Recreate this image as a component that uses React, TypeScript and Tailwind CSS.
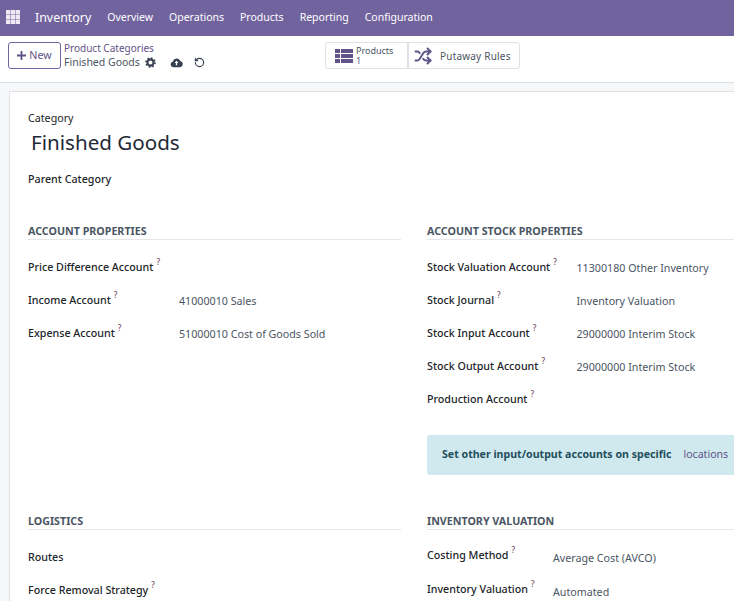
import React from "react";
import { Shuffle, RotateCcw } from "lucide-react";

const Row = ({ label, value, help = true, w = "w-[150px]", h = "h-[33px]", pt = "pt-[1px]" }: { label: string; value?: string; help?: boolean; w?: string; h?: string; pt?: string }) => (
  <div className={`flex ${h} items-start text-[10.7px] leading-[17px]`}>
    <div className={`${w} shrink-0 text-[#212529] font-medium whitespace-nowrap`}>
      {label}
      {help && <sup className="ml-[3px] text-[8px] text-[#714b67] top-[-6px]">?</sup>}
    </div>
    {value && <div className={`${pt} text-[#4b5563] whitespace-nowrap`}>{value}</div>}
  </div>
);

const Heading = ({ children }: { children: React.ReactNode }) => (
  <div className="h-[16px] border-b border-[#e3e6ea] text-[10.7px] font-bold leading-[15px] text-[#4b5563]">{children}</div>
);

export default function App() {
  return (
    <div className="h-[601px] w-[734px] overflow-hidden bg-white font-['Noto_Sans',sans-serif]">
      <nav className="flex h-9 items-center bg-[#71639e] pb-[1px] text-[10.5px] text-white">
        <svg className="mb-[2px] ml-[6px] h-[14px] w-[14px]" viewBox="0 0 14 14">
          {[0, 5, 10].map((y) => [0, 5, 10].map((x) => <rect key={`${x}${y}`} x={x} y={y} width="4.5" height="4.5" fill="#f1e9f2" />))}
        </svg>
        <span className="ml-[15px] mt-[2px] text-[12.4px]">Inventory</span>
        <div className="ml-4 flex gap-4">
          <span>Overview</span>
          <span>Operations</span>
          <span>Products</span>
          <span>Reporting</span>
          <span>Configuration</span>
        </div>
      </nav>

      <header className="relative flex h-[47px] items-start border-b border-[#dee2e6] pl-2 pt-[6px]">
        <button className="flex h-[27px] w-[53px] items-center justify-center gap-[3px] rounded-[3px] border border-[#71639e] text-[10.7px] text-[#5f5387]">
          <svg className="h-[9px] w-[9px]" viewBox="0 0 10 10"><path d="M4 0h2v4h4v2H6v4H4V6H0V4h4z" fill="#5f5387" /></svg>
          New
        </button>
        <div className="ml-[3px] mt-[-1px] leading-[14px]">
          <div className="text-[10px] text-[#5f5387]">Product Categories</div>
          <div className="flex items-center text-[10.5px] text-[#4b5563]">
            Finished Goods
            <svg className="ml-[5px] h-[11px] w-[11px]" viewBox="0 0 12 12"><circle cx="6" cy="6" r="3.4" fill="none" stroke="#374151" strokeWidth="2.4" /><circle cx="6" cy="6" r="5" fill="none" stroke="#374151" strokeWidth="1.6" strokeDasharray="1.8 2.1" /></svg>
            <svg className="ml-[14px] h-[11px] w-[13px]" viewBox="0 0 14 11"><path d="M3.5 10.5a3 3 0 0 1-.6-5.9A4.3 4.3 0 0 1 11 3.8a3.4 3.4 0 0 1 0 6.7z" fill="#374151" /><path d="M7 3.5 4.8 6h1.5v2.5h1.4V6h1.5z" fill="#fff" /></svg>
            <RotateCcw className="ml-[11px] h-[11px] w-[11px] text-[#374151]" strokeWidth={2.5} />
          </div>
        </div>
        <div className="absolute left-[325px] top-[6px] flex h-[27px] rounded-[3px] border border-[#dee2e6]">
          <div className="flex w-[83px] items-center border-r-2 border-[#dee2e6] pl-[9px]">
            <svg className="h-[14px] w-[18px]" viewBox="0 0 18 14" fill="#5f5387">
              <rect width="5" height="4" /><rect y="5" width="5" height="4" /><rect y="10" width="5" height="4" />
              <rect x="6" width="12" height="4" /><rect x="6" y="5" width="12" height="4" /><rect x="6" y="10" width="12" height="4" />
            </svg>
            <div className="ml-[3px] text-[9px] leading-[10px] text-[#4b5563]">Products<div className="text-[#5f5387]">1</div></div>
          </div>
          <div className="flex w-[110px] items-center pl-[5px] text-[10px] text-[#4b5563]">
            <Shuffle className="h-[18px] w-[18px] text-[#5f5387]" strokeWidth={2.6} />
            <span className="ml-2 mt-[1px] tracking-[0.2px]">Putaway Rules</span>
          </div>
        </div>
      </header>

      <main className="h-[518px] bg-[#f6f7f8] bg-[radial-gradient(#e5e7eb_0.5px,transparent_0.5px)] bg-[length:2px_2px] pl-[9px] pt-2">
        <section className="h-[510px] border-l border-t border-[#dee2e6] bg-white pl-[18px] pt-[19px]">
          <div className="text-[10.7px] leading-[15px] text-[#212529]">Category</div>
          <h1 className="ml-[3px] mt-[1px] text-[20.6px] leading-[30px] text-[#1f2937]">Finished Goods</h1>
          <div className="mt-[14px] text-[10.7px] font-medium leading-[17px] text-[#212529]">Parent Category</div>

          <div className="mt-[36px] grid grid-cols-[373px_320px] gap-x-[26px]">
            <div>
              <Heading>ACCOUNT PROPERTIES</Heading>
              <div className="mt-[19px]">
                <Row label="Price Difference Account" />
                <Row label="Income Account" value="41000010 Sales" w="w-[151px]" />
                <Row label="Expense Account" value="51000010 Cost of Goods Sold" w="w-[151px]" />
              </div>
            </div>
            <div>
              <Heading>ACCOUNT STOCK PROPERTIES</Heading>
              <div className="mt-[19px]">
                <Row label="Stock Valuation Account" value="11300180 Other Inventory" w="w-[149.5px]" />
                <Row label="Stock Journal" value="Inventory Valuation" w="w-[149.5px]" />
                <Row label="Stock Input Account" value="29000000 Interim Stock" w="w-[149.5px]" />
                <Row label="Stock Output Account" value="29000000 Interim Stock" w="w-[149.5px]" />
                <Row label="Production Account" />
              </div>
              <div className="mt-[11px] flex h-10 items-center rounded-l-[3px] bg-[#d0e9ef] pl-[15px] text-[10.6px] whitespace-nowrap">
                <span className="font-bold text-[#1f4f5c]">Set other input/output accounts on specific</span>
                <span className="ml-3 text-[#5f5387]">locations</span>
              </div>
            </div>
            <div className="mt-[39px]">
              <Heading>LOGISTICS</Heading>
              <div className="mt-[19px]">
                <Row label="Routes" help={false} />
                <Row label="Force Removal Strategy" />
              </div>
            </div>
            <div className="mt-[39px]">
              <Heading>INVENTORY VALUATION</Heading>
              <div className="mt-[17px]">
                <Row label="Costing Method" value="Average Cost (AVCO)" w="w-[126px]" h="h-[34px]" pt="pt-[3px]" />
                <Row label="Inventory Valuation" value="Automated" w="w-[126px]" pt="pt-[3px]" />
              </div>
            </div>
          </div>
        </section>
      </main>
    </div>
  );
}
